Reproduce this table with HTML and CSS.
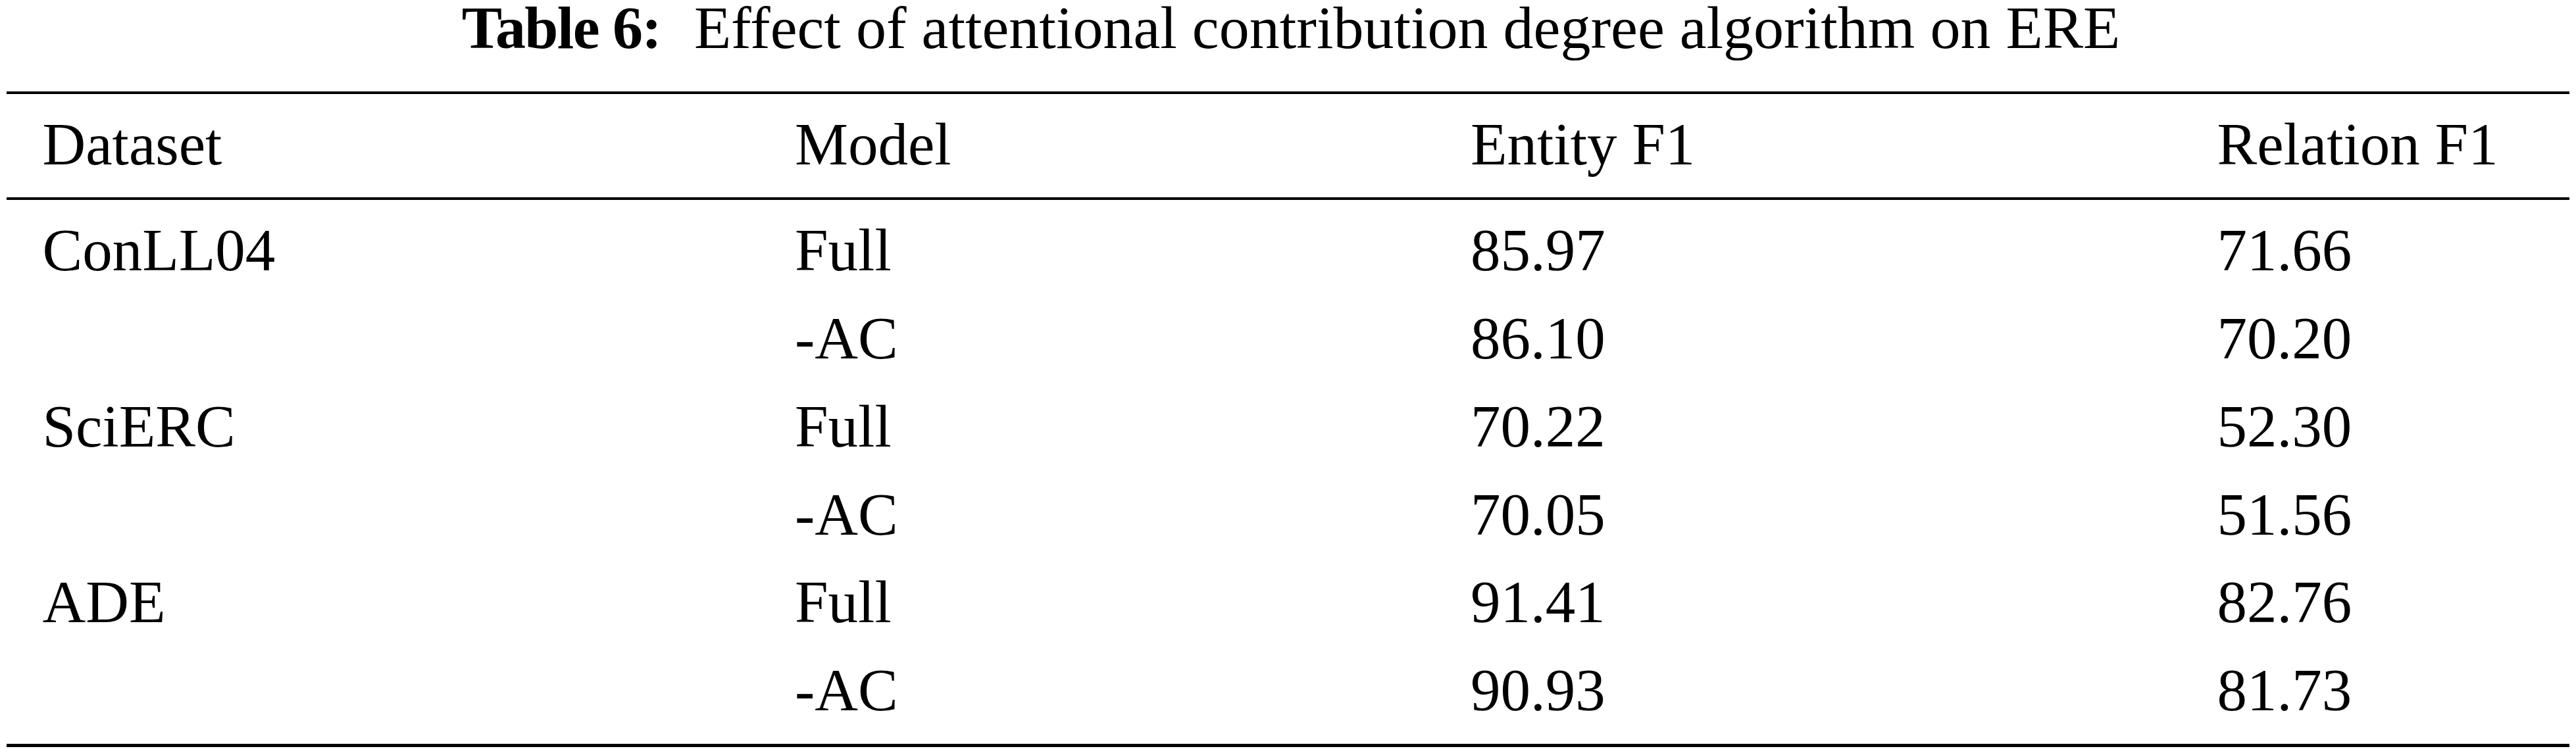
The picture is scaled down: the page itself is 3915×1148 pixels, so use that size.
FILE: index.html
```html
<!DOCTYPE html>
<html lang="en">
<head>
	<meta charset="UTF-8">
	<meta name="viewport" content="width=device-width, initial-scale=1.0">
	<title>Table 6</title>
	<link rel="stylesheet" href="styles.css">
</head>
<body>
	<div class="table">
		<div class="caption"><span class="label">Table 6:</span> Effect of attentional contribution degree algorithm on ERE</div>

		<div class="row head">
			<span>Dataset</span>
			<span>Model</span>
			<span>Entity F1</span>
			<span>Relation F1</span>
		</div>

		<div class="rows">
			<div class="row">
				<span>ConLL04</span>
				<span>Full</span>
				<span>85.97</span>
				<span>71.66</span>
			</div>
			<div class="row">
				<span></span>
				<span>-AC</span>
				<span>86.10</span>
				<span>70.20</span>
			</div>
			<div class="row">
				<span>SciERC</span>
				<span>Full</span>
				<span>70.22</span>
				<span>52.30</span>
			</div>
			<div class="row">
				<span></span>
				<span>-AC</span>
				<span>70.05</span>
				<span>51.56</span>
			</div>
			<div class="row">
				<span>ADE</span>
				<span>Full</span>
				<span>91.41</span>
				<span>82.76</span>
			</div>
			<div class="row">
				<span></span>
				<span>-AC</span>
				<span>90.93</span>
				<span>81.73</span>
			</div>
		</div>
	</div>
</body>
</html>
```

FILE: styles.css
```css
body {
	margin: 0;
	background: #fff;
	color: #000;
	font-family: "Liberation Serif", "Times New Roman", serif;
}
.table {
	width: 3895px;
	margin: 0 10px;
}
.caption {
	font-size: 92px;
	line-height: 85px;
	text-align: center;
	padding-left: 9px;
	margin-bottom: 54.3px;
	white-space: nowrap;
}
.label {
	font-weight: bold;
	letter-spacing: -1.7px;
	margin-right: 0.3em;
}
.row {
	display: grid;
	grid-template-columns: 1143.5px 1027px 1134.5px 1fr;
	font-size: 91px;
	line-height: 133.9px;
	white-space: nowrap;
}
.row span {
	padding-left: 54.5px;
}
.head {
	border-top: 4.7px solid #000;
	border-bottom: 4.7px solid #000;
	padding: 10px 0 13px;
}
.rows {
	padding: 9.6px 0 14px;
	border-bottom: 5px solid #000;
}
```
